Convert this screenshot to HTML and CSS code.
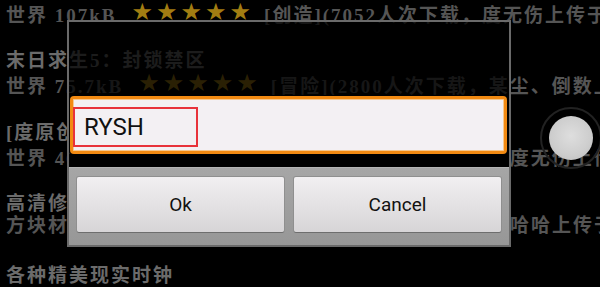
FILE: index.html
```html
<!DOCTYPE html>
<html>
<head>
<meta charset="utf-8">
<link rel="stylesheet" href="styles.css">
</head>
<body>
<div class="list">
  <div class="item">
    <div class="title">世界末日之城</div>
    <div class="sub"><span>世界 107kB</span><span class="stars">★★★★★</span><span>[创造](7052人次下载，度无伤上传于2014</span></div>
  </div>
  <div class="item">
    <div class="title">末日求生5：封锁禁区</div>
    <div class="sub"><span>世界 75.7kB</span><span class="stars">★★★★★</span><span>[冒险](2800人次下载，某尘、倒数上传</span></div>
  </div>
  <div class="item">
    <div class="title">[度原创]方块世界大冒险</div>
    <div class="sub"><span>世界 46.2kB</span><span class="stars">★★★★★</span><span>[跑酷](1893人次下载，由度无伤上传于</span></div>
  </div>
  <div class="item">
    <div class="title">高清修复材质包</div>
    <div class="sub">方块材质全面高清修复版本来自网络整理收集，由玩家哈哈上传于</div>
  </div>
  <div class="item">
    <div class="title">各种精美现实时钟</div>
    <div class="sub">世界 12.4kB</div>
  </div>
</div>

<div class="fab"><div class="fab-ring"></div><div class="fab-knob"></div></div>

<div class="dialog">
  <div class="dialog-top"></div>
  <div class="input">
    <div class="input-text">RYSH</div>
  </div>
  <div class="gap"></div>
  <div class="buttons">
    <div class="btn">Ok</div>
    <div class="btn">Cancel</div>
  </div>
</div>
</body>
</html>
```

FILE: styles.css
```css
html, body {
  margin: 0;
  padding: 0;
}
body {
  background: #000;
  width: 600px;
  height: 287px;
  overflow: hidden;
  position: relative;
}
.list {
  margin-top: -21.5px;
  font-family: "Liberation Serif", "Noto Sans CJK SC", serif;
  font-weight: bold;
  font-size: 19px;
  letter-spacing: 2px;
}
.item {
  padding: 0 0 27.5px 6px;
  white-space: nowrap;
}
.title {
  line-height: 22px;
  height: 22px;
  color: #6b6b6b;
}
.sub {
  line-height: 22px;
  height: 22px;
  color: #555;
}
.stars {
  font-family: "DejaVu Sans", sans-serif;
  font-weight: normal;
  font-size: 24px;
  letter-spacing: 3px;
  color: #a27d12;
  margin: 0 10px 0 15px;
  vertical-align: 2px;
}
.fab {
  position: absolute;
  left: 540px;
  top: 107px;
  width: 62px;
  height: 62px;
}
.fab-ring {
  position: absolute;
  inset: 0;
  border-radius: 50%;
  border: 2px solid #222;
  box-sizing: border-box;
}
.fab-knob {
  position: absolute;
  left: 9px;
  top: 9px;
  width: 44px;
  height: 44px;
  border-radius: 50%;
  background: radial-gradient(circle at 50% 45%, #dedede 0%, #cdcdcd 60%, #b9b9b9 100%);
}
.dialog {
  position: absolute;
  left: 67px;
  top: 20px;
  width: 444px;
  height: 227px;
  box-sizing: border-box;
  border: 2px solid #6a6a6a;
  background: rgba(0, 0, 0, 0.74);
  display: flex;
  flex-direction: column;
}
.dialog-top {
  height: 74px;
  flex: none;
}
.input {
  flex: none;
  height: 58px;
  margin: 0 2px 0 1px;
  box-sizing: border-box;
  border: 3px solid #f28a12;
  border-radius: 4px;
  background: #f3f0f3;
  box-shadow: inset 0 0 0 1px #f7c88e, 0 0 0 1px #000;
  padding-top: 8px;
}
.input-text {
  width: 125px;
  height: 40px;
  box-sizing: border-box;
  border: 2px solid #e8323a;
  padding-left: 9px;
  font-family: Roboto, "Liberation Sans", sans-serif;
  font-size: 24px;
  line-height: 36px;
  color: #111;
}
.gap {
  flex: none;
  height: 13px;
  background: #000;
}
.buttons {
  flex: 1;
  display: flex;
  gap: 10px;
  padding: 9px 8px 13px;
  background: linear-gradient(#a6a6a6, #979797);
  border-top: 1px solid #b4b4b4;
}
.btn {
  flex: 1;
  display: flex;
  align-items: center;
  justify-content: center;
  border-radius: 2px;
  background: linear-gradient(#f1eff1, #d7d5d7);
  box-shadow: 0 1px 0 #6e6e6e, 0 0 0 1px #8f8f8f;
  font-family: Roboto, "Liberation Sans", sans-serif;
  font-size: 19px;
  color: #111;
}
```
